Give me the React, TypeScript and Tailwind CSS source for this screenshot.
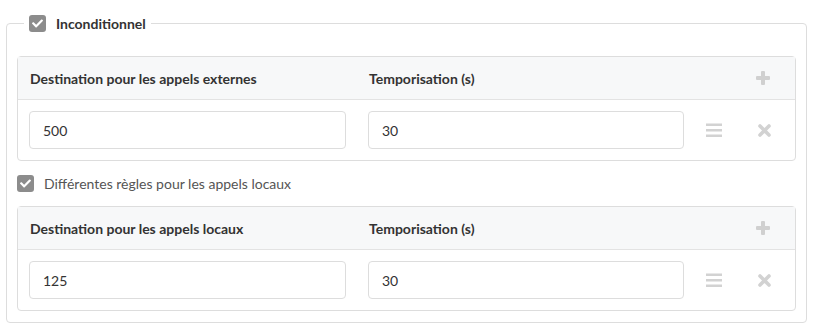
import { FaCheck } from "react-icons/fa";

function Check() {
	return (
		<span className="flex h-[17px] w-[17px] shrink-0 items-center justify-center rounded-[3px] bg-[#8c8c8c]">
			<FaCheck className="h-[11px] w-[11px] text-white" />
		</span>
	);
}

function PlusIcon() {
	return (
		<svg width="14" height="14" viewBox="0 0 14 14" className="text-[#d0d0d0]">
			<rect x="5" y="0" width="4" height="14" rx="1" fill="currentColor" />
			<rect x="0" y="5" width="14" height="4" rx="1" fill="currentColor" />
		</svg>
	);
}

function BarsIcon() {
	return (
		<svg width="16" height="14" viewBox="0 0 16 14" className="text-[#d2d2d2]">
			<rect x="0" y="0.5" width="16" height="2.5" fill="currentColor" />
			<rect x="0" y="6" width="16" height="2.5" fill="currentColor" />
			<rect x="0" y="11.5" width="16" height="2.5" fill="currentColor" />
		</svg>
	);
}

function CloseIcon() {
	return (
		<svg width="13" height="13" viewBox="0 0 13 13" className="text-[#d2d2d2]">
			<path d="M2 2 L11 11 M11 2 L2 11" stroke="currentColor" strokeWidth="3.6" strokeLinecap="round" />
		</svg>
	);
}

function RulePanel(props: { label: string; destination: string; delay: string }) {
	return (
		<div className="rounded-[4px] border border-[#dddddd]">
			<div className="flex h-[43px] items-center border-b border-[#e3e3e3] bg-[#f7f8f9] px-[12px] text-[14px] font-bold text-[#333]">
				<div className="w-[339px]">{props.label}</div>
				<div className="flex-1">Temporisation (s)</div>
				<div className="flex w-[40px] justify-center">
					<PlusIcon />
				</div>
			</div>
			<div className="flex items-center px-[11px] py-[11px]">
				<input
					readOnly
					value={props.destination}
					className="h-[38px] w-[317px] rounded-[4px] border border-[#dddddd] px-[13px] text-[14px] text-[#333] outline-none"
				/>
				<input
					readOnly
					value={props.delay}
					className="ml-[22px] h-[38px] w-[316px] rounded-[4px] border border-[#dddddd] px-[13px] text-[14px] text-[#333] outline-none"
				/>
				<div className="ml-[10px] flex w-[40px] justify-center">
					<BarsIcon />
				</div>
				<div className="ml-[10px] flex w-[40px] justify-center">
					<CloseIcon />
				</div>
			</div>
		</div>
	);
}

export default function App() {
	return (
		<div className="h-[332px] w-[815px] bg-white pl-[6px] pt-[14px]" style={{ fontFamily: "Lato, 'Noto Sans', sans-serif" }}>
			<fieldset className="w-[800px] rounded-[4px] border border-[#dddddd] px-[10px] pb-[11px] pt-[24px]">
				<legend className="ml-[7px] px-[5px]">
					<div className="flex h-[18px] items-center gap-[10px] text-[14px] font-bold text-[#333]">
						<Check />
						<span>Inconditionnel</span>
					</div>
				</legend>
				<RulePanel label="Destination pour les appels externes" destination="500" delay="30" />
				<div className="my-[14px] flex h-[17px] items-center gap-[10px] text-[14px] text-[#555]">
					<Check />
					<span>Différentes règles pour les appels locaux</span>
				</div>
				<RulePanel label="Destination pour les appels locaux" destination="125" delay="30" />
			</fieldset>
		</div>
	);
}
